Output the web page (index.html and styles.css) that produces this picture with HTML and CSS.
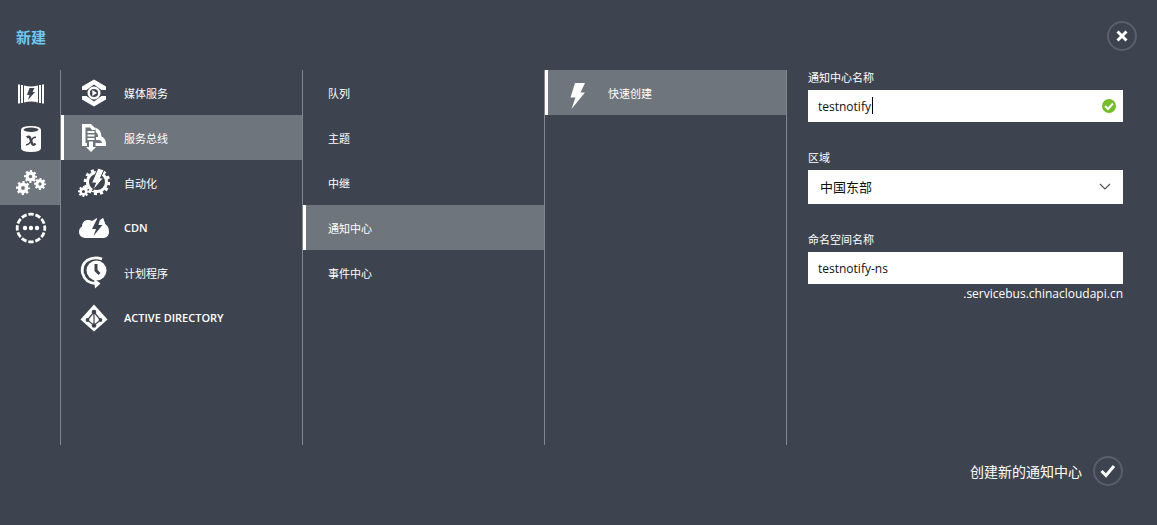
FILE: index.html
```
<!DOCTYPE html>
<html lang="zh-CN">
<head>
<meta charset="utf-8">
<title>新建</title>
<link rel="stylesheet" href="styles.css">
</head>
<body>
<svg class="defs" aria-hidden="true">
  <symbol id="gear" viewBox="0 0 24 24">
    <circle cx="12" cy="12" r="6.3" fill="none" stroke="currentColor" stroke-width="6"/>
    <circle cx="12" cy="12" r="9.8" fill="none" stroke="currentColor" stroke-width="4.400" pathLength="80" stroke-dasharray="5 5" stroke-dashoffset="2.5"/>
  </symbol>
  <symbol id="bolt" viewBox="0 0 16 26">
    <path d="M5 0H15L10.500 9.500H15L1.500 26L5.500 14.500H0.500Z" fill="currentColor"/>
  </symbol>
</svg>
<div class="drawer">
  <header class="top">
    <h1 class="title">新建</h1>
    <button class="round" type="button" aria-label="关闭">
      <svg width="12" height="12" viewBox="0 0 12 12"><path d="M1.500 1.500L10.500 10.500M10.500 1.500L1.500 10.500" fill="none" stroke="currentColor" stroke-width="3"/></svg>
    </button>
  </header>
  <main class="columns">
    <nav class="rail" aria-label="类别">
      <button class="rail-item" type="button" aria-label="计算">
        <svg width="28" height="22" viewBox="0 0 28 22" fill="currentColor">
          <path d="M1 1.500H3V20.500H1ZM4 2H6V20H4ZM7 2.500Q14 4.500 21 2.500V19.500Q14 17.500 7 19.500ZM22 2H24V20H22ZM25 1.500H27V20.500H25Z"/>
          <path d="M12.500 5H17.500L15.500 9H18L11 17L12.500 12H10Z" fill="#3e444f"/>
        </svg>
      </button>
      <button class="rail-item" type="button" aria-label="数据服务">
        <svg width="22" height="28" viewBox="0 0 22 28">
          <path d="M1 5Q1 1 11 1T21 5V23Q21 27 11 27T1 23Z" fill="currentColor"/>
          <ellipse cx="11" cy="4.800" rx="7.500" ry="2.200" fill="#3e444f"/>
          <path d="M6.800 12.500Q9.300 10.500 10.300 13.500L12 18.500Q13 21 15.500 18.500" fill="none" stroke="#3e444f" stroke-width="2.400"/>
          <path d="M16 12.500Q13.500 11.500 11 16Q8.500 20.500 6 19.500" fill="none" stroke="#3e444f" stroke-width="1.500"/>
        </svg>
      </button>
      <button class="rail-item selected" type="button" aria-label="应用程序服务">
        <svg width="30" height="26" viewBox="0 0 30 26">
          <use href="#gear" x="8" y="0" width="13" height="13"/>
          <use href="#gear" x="0" y="11" width="14" height="14"/>
          <use href="#gear" x="18" y="8" width="12" height="12"/>
        </svg>
      </button>
      <button class="rail-item" type="button" aria-label="网络服务">
        <svg width="32" height="32" viewBox="0 0 32 32" fill="currentColor">
          <circle cx="16" cy="16" r="13.800" fill="none" stroke="currentColor" stroke-width="2.800" pathLength="120" stroke-dasharray="7.500 2.500" stroke-dashoffset="3.700"/>
          <circle cx="10" cy="16" r="2.200"/><circle cx="16" cy="16" r="2.200"/><circle cx="22" cy="16" r="2.200"/>
        </svg>
      </button>
    </nav>
    <nav class="column" aria-label="服务">
      <button class="item" type="button">
        <span class="icon"><svg width="26" height="28" viewBox="0 0 26 28">
          <path d="M1 11V7.500L13 .5L25 7.500V11H20.500L13 5.500L5.500 11ZM1 17V20.500L13 27.500L25 20.500V17H20.500L13 22.500L5.500 17Z" fill="currentColor"/>
          <circle cx="13" cy="14" r="5.300" fill="none" stroke="currentColor" stroke-width="2.400"/>
          <path d="M11.300 11L16 14L11.300 17Z" fill="currentColor"/>
        </svg></span>媒体服务
      </button>
      <button class="item selected" type="button">
        <span class="icon"><svg width="26" height="30" viewBox="0 0 26 30">
          <path d="M1 1H10L14 5V7H11L9 4.500H4.500V20H6V23H1Z" fill="currentColor"/>
          <path d="M6.500 8H13.500V10H6.500ZM6.500 11.500H13.500V13.500H6.500ZM6.500 15H13.500V17H6.500ZM8 18.500H12V24H15L10 29L5 24H8Z" fill="currentColor"/>
          <path d="M14 4.500Q20 6 20.500 13.500Q25.500 15.500 25 23H14.500V20H21Q21 17.500 18 17H15V14H17Q17.500 11 15 9.500Z" fill="currentColor"/>
        </svg></span>服务总线
      </button>
      <button class="item" type="button">
        <span class="icon"><svg width="32" height="30" viewBox="0 0 32 30">
          <circle cx="19" cy="14" r="9.500" fill="none" stroke="currentColor" stroke-width="3"/>
          <circle cx="19" cy="14" r="11.800" fill="none" stroke="currentColor" stroke-width="3" pathLength="120" stroke-dasharray="5 5"/>
          <path d="M20 0L26 2L22.500 10H25.500L14.500 23L17.500 15H13.500Z" fill="currentColor" stroke="#3e444f"/>
          <use href="#gear" x="0" y="18" width="11" height="11"/>
        </svg></span>自动化
      </button>
      <button class="item" type="button">
        <span class="icon"><svg width="32" height="24" viewBox="0 0 32 24">
          <path d="M7 22Q1 21 1 16Q1 12 4 10.500Q4 5 9 4Q12 3.500 14 5L19 2V6L25 2L27 8Q31 10 31 16Q31 21 26 22Z" fill="currentColor"/>
          <path d="M19.500 2L22.500 1.500L20.500 9H24.500L15.500 20L18 13H14Z" fill="#3e444f"/>
          <path d="M22.500 8.500L25 2L27.500 8.500Z" fill="currentColor"/>
        </svg></span><span class="latin">CDN</span>
      </button>
      <button class="item" type="button">
        <span class="icon"><svg width="28" height="34" viewBox="0 0 28 34">
          <circle cx="16.500" cy="14.500" r="10" fill="currentColor"/>
          <path d="M16 8V14.500L19.500 18" fill="none" stroke="#3e444f" stroke-width="3"/>
          <path d="M22 3Q14 0 7 4.500Q1 9 2.500 17Q5 27 16 27.500" fill="none" stroke="currentColor" stroke-width="2.800"/>
          <path d="M14 22.500L20.500 27.500L15 32.500Z" fill="currentColor"/>
        </svg></span>计划程序
      </button>
      <button class="item" type="button">
        <span class="icon"><svg width="28" height="28" viewBox="0 0 28 28">
          <path d="M14 .5L27.500 15.500L14 27.500L.5 15.500Z" fill="currentColor"/>
          <path d="M14 8V22M14 8L7.500 16L14 21.500L20.500 16Z" fill="none" stroke="#3e444f" stroke-width="1.200"/>
          <g fill="#3e444f"><circle cx="14" cy="8" r="2.300"/><circle cx="7.500" cy="16" r="1.900"/><circle cx="20.500" cy="16" r="1.900"/><circle cx="14" cy="21.500" r="2.300"/></g>
        </svg></span><span class="latin">ACTIVE DIRECTORY</span>
      </button>
    </nav>
    <nav class="column" aria-label="服务总线">
      <button class="item plain" type="button">队列</button>
      <button class="item plain" type="button">主题</button>
      <button class="item plain" type="button">中继</button>
      <button class="item plain selected" type="button">通知中心</button>
      <button class="item plain" type="button">事件中心</button>
    </nav>
    <nav class="column" aria-label="创建方式">
      <button class="item selected" type="button">
        <span class="icon"><svg class="quick" width="16" height="26"><use href="#bolt"/></svg></span>快速创建
      </button>
    </nav>
    <form class="form" id="create">
      <div class="field">
        <label for="name">通知中心名称</label>
        <div class="control">
          <input id="name" type="text" value="testnotify">
          <span class="caret"></span>
          <svg class="mark" width="14" height="14" viewBox="0 0 14 14"><circle cx="7" cy="7" r="7" fill="#76bd2b"/><path d="M3 7L6 10L11 4.500" fill="none" stroke="#fff" stroke-width="2"/></svg>
        </div>
      </div>
      <div class="field">
        <label for="region">区域</label>
        <div class="control">
          <select id="region"><option>中国东部</option></select>
          <svg class="mark chevron" width="12" height="8" viewBox="0 0 12 8"><path d="M1 1L6 6L11 1" fill="none" stroke="#555" stroke-width="1.200"/></svg>
        </div>
      </div>
      <div class="field">
        <label for="space">命名空间名称</label>
        <div class="control"><input id="space" type="text" value="testnotify-ns"></div>
        <p class="suffix">.servicebus.chinacloudapi.cn</p>
      </div>
    </form>
  </main>
  <footer class="bottom">
    <label for="submit">创建新的通知中心</label>
    <button class="round" id="submit" type="submit" form="create">
      <svg width="16" height="14" viewBox="0 0 16 14"><path d="M1.500 7L6 11.500L14 2" fill="none" stroke="currentColor" stroke-width="3"/></svg>
    </button>
  </footer>
</div>
</body>
</html>
```

FILE: styles.css
```
* { box-sizing: border-box; }
body {
  margin: 0;
  min-height: 100vh;
  background: #3e444f;
  color: #fff;
  font: 12px "Open Sans", "Noto Sans CJK SC", sans-serif;
}
button { border: 0; padding: 0; margin: 0; background: none; color: inherit; font: inherit; }
svg { display: block; }
.defs { position: absolute; width: 0; height: 0; }
.top {
  display: flex;
  align-items: center;
  justify-content: space-between;
  height: 70px;
  padding: 2px 20px 0 16px;
}
.title { margin: 0; color: #6fc8f1; font-size: 15px; font-weight: 700; }
.round {
  display: grid;
  place-items: center;
  width: 30px;
  height: 30px;
  border: 2px solid #5a606b;
  border-radius: 50%;
}
.columns {
  display: grid;
  grid-template-columns: 60px repeat(3, 242px) minmax(240px, 1fr);
  min-height: 375px;
}
.rail-item { display: grid; place-items: center; width: 100%; height: 45px; padding-left: 1px; }
.rail-item:nth-child(-n+2) { padding-top: 3px; }
.column { border-left: 1px solid #83878d; }
.item {
  display: flex;
  align-items: center;
  width: 100%;
  height: 45px;
  padding-left: 3px;
  border-left: 3px solid transparent;
  font-size: 11px;
  text-align: left;
}
.latin { font-weight: 600; }
.selected { background: #6e757c; }
.item.selected { border-left-color: #fff; }
.plain { padding-left: 22px; }
.icon { display: grid; place-items: center; width: 54px; margin-right: 3px; }
.quick { margin-top: 6px; }
.form {
  display: flex;
  flex-direction: column;
  gap: 28px;
  padding: 0 34px 0 21px;
  border-left: 1px solid #83878d;
}
.field label { display: block; margin-bottom: 4px; font-size: 11px; line-height: 16px; }
.control { position: relative; }
.control input, .control select {
  display: block;
  width: 100%;
  height: 32px;
  padding: 0 10px;
  border: 0;
  border-radius: 0;
  outline: 0;
  appearance: none;
  background: #fff;
  color: #111;
  font: inherit;
}
.control select { height: 34px; padding-left: 12px; font-size: 13px; }
.caret { position: absolute; top: 7px; left: 64px; width: 1px; height: 17px; background: #000; }
.mark { position: absolute; top: 9px; right: 7px; }
.chevron { top: 13px; right: 12px; }
.suffix { margin: 0; line-height: 20px; text-align: right; }
.bottom {
  display: flex;
  align-items: center;
  justify-content: flex-end;
  gap: 11px;
  padding: 11px 34px 24px;
  font-size: 14px;
}
```
